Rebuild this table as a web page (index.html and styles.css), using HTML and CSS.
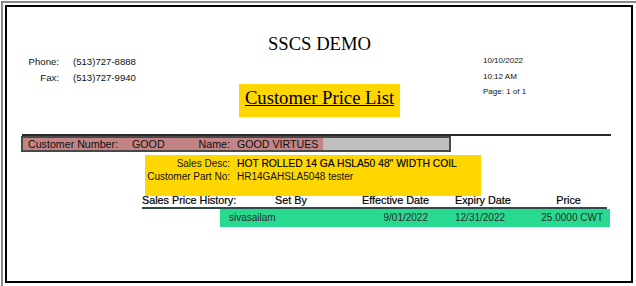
FILE: index.html
```html
<!DOCTYPE html>
<html>
<head>
<meta charset="utf-8">
<link rel="stylesheet" href="styles.css">
</head>
<body>
<div class="frame">
  <div class="page">
    <div class="header">
      <div class="contact">
        <span class="clabel">Phone:</span><span class="cval">(513)727-8888</span>
        <span class="clabel">Fax:</span><span class="cval">(513)727-9940</span>
      </div>
      <div class="center">
        <div class="company">SSCS DEMO</div>
        <div class="report-title"><span class="ul">Customer Price List</span></div>
      </div>
      <div class="meta">
        <div>10/10/2022</div>
        <div>10:12 AM</div>
        <div>Page: 1 of 1</div>
      </div>
    </div>
    <div class="rule"></div>
    <div class="cust">
      <div class="cust-pink">
        <span>Customer Number:</span>
        <span class="cust-num">GOOD</span>
        <span class="cust-name-label">Name:</span>
        <span class="cust-name">GOOD VIRTUES</span>
      </div>
      <div class="cust-gray"></div>
    </div>
    <div class="desc">
      <span class="dlabel">Sales Desc:</span><span class="dval strong">HOT ROLLED 14 GA HSLA50 48" WIDTH COIL</span>
      <span class="dlabel">Customer Part No:</span><span class="dval">HR14GAHSLA5048 tester</span>
    </div>
    <div class="history">
      <div class="hist-head">
        <span class="h1">Sales Price History:</span>
        <span class="h2">Set By</span>
        <span class="h3">Effective Date</span>
        <span class="h4">Expiry Date</span>
        <span class="h5">Price</span>
      </div>
      <div class="hist-row">
        <span class="r1">sivasailam</span>
        <span class="r2">9/01/2022</span>
        <span class="r3">12/31/2022</span>
        <span class="r4">25.0000 CWT</span>
      </div>
    </div>
  </div>
</div>
</body>
</html>
```
FILE: styles.css
```css
* { box-sizing: border-box; }
html, body { margin: 0; padding: 0; background: #fff; }
body {
  font-family: "Liberation Sans", Arial, sans-serif;
  color: #111;
  width: 636px;
  height: 286px;
  overflow: hidden;
}
.frame {
  margin: 1px 0 0 1px;
  border-top: 2px solid #8a8a8a;
  border-left: 2px solid #8a8a8a;
  padding: 2px 0 0 2px;
  height: 285px;
}
.page {
  width: 628px;
  height: 278px;
  border: 2px solid #000;
}
.header {
  display: grid;
  grid-template-columns: 232px 161px 1fr;
  height: 110px;
}
.contact {
  display: grid;
  grid-template-columns: 52px auto;
  column-gap: 14px;
  align-content: start;
  padding-top: 47px;
  font-size: 9.6px;
  line-height: 16px;
  color: #111;
}
.clabel { text-align: right; }
.center {
  padding-top: 26px;
  font-family: "Liberation Serif", "Times New Roman", serif;
  font-size: 18.67px;
  line-height: 22px;
  color: #000;
}
.company {
  text-align: center;
  white-space: nowrap;
}
.report-title {
  margin-top: 29px;
  height: 33px;
  padding-top: 3px;
  background: #ffd700;
  text-align: center;
}
.ul { text-decoration: underline; text-decoration-thickness: 1px; }
.meta {
  padding-top: 46px;
  padding-left: 83px;
  font-size: 8px;
  line-height: 15.5px;
  color: #111;
}
.rule {
  margin: 17px 20px 0 15px;
  height: 2px;
  background: #2a2a2a;
}
.cust {
  margin: 0 0 0 14px;
  width: 430px;
  height: 16px;
  border: 2px solid #484848;
  display: flex;
  font-size: 10.67px;
  line-height: 12px;
  color: #111;
}
.cust-pink {
  width: 300px;
  background: #c28484;
  padding-left: 5px;
  display: flex;
  white-space: nowrap;
}
.cust-num { margin-left: 14px; }
.cust-name-label { margin-left: 34px; }
.cust-name { margin-left: 7px; }
.cust-gray { flex: 1; background: #c0c0c0; }
.desc {
  margin: 3px 0 0 138px;
  width: 336px;
  height: 41px;
  background: #ffd700;
  padding-top: 2px;
  display: grid;
  grid-template-columns: 85px auto;
  column-gap: 7px;
  align-content: start;
  font-size: 10px;
  line-height: 13px;
  color: #111;
}
.dlabel { text-align: right; }
.dval { white-space: nowrap; }
.strong { font-size: 10.3px; color: #000; -webkit-text-stroke: 0.15px #000; }
.history {
  margin: -2px 0 0 135px;
}
.hist-head {
  display: flex;
  width: 465px;
  font-size: 10.8px;
  line-height: 13px;
  color: #000;
  -webkit-text-stroke: 0.2px #000;
  border-bottom: 2px solid #2f4a4a;
  white-space: nowrap;
}
.h1 { width: 120px; }
.h2 { width: 58px; text-align: center; }
.h3 { width: 110px; text-align: right; padding-right: 1px; }
.h4 { width: 100px; padding-left: 25px; }
.h5 { width: 77px; text-align: center; }
.hist-row {
  display: flex;
  margin-left: 78px;
  width: 390px;
  height: 18px;
  background: #28da90;
  font-size: 10px;
  line-height: 18px;
  color: #2a2a2a;
  white-space: nowrap;
}
.r1 { width: 110px; padding-left: 9px; }
.r2 { width: 98px; text-align: right; }
.r3 { width: 102px; padding-left: 27px; }
.r4 { width: 80px; text-align: right; padding-right: 7px; }
```
